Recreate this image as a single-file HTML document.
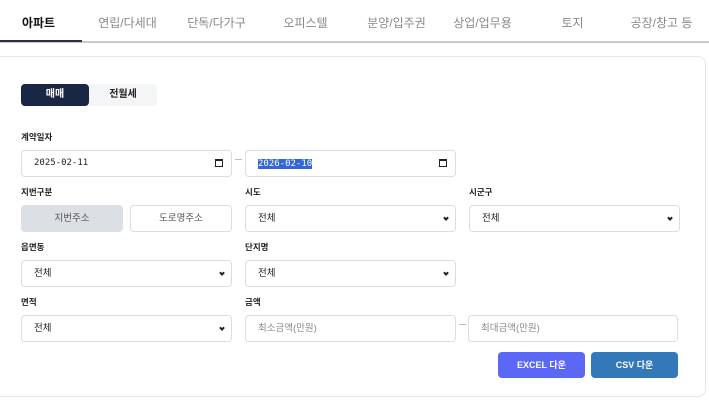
<!DOCTYPE html>
<html><head><meta charset="utf-8"><style>
*{box-sizing:border-box;margin:0;padding:0}
html,body{width:709px;height:401px;overflow:hidden}
body{background:#fff;font-family:"Liberation Sans","Noto Sans CJK KR",sans-serif;position:relative;color:#222}
.a{position:absolute}
.tab{position:absolute;top:14px;font-size:12px;color:#888;text-align:center;width:89px}
.lbl{position:absolute;font-size:8.5px;font-weight:bold;color:#222}
.box{position:absolute;height:27px;border:1px solid #ddd;border-radius:4px;background:#fff;font-size:9.5px;line-height:25px;padding-left:12px}
.chev{position:absolute;right:7px;top:10px;width:4px;height:4px;border-right:2px solid #222;border-bottom:2px solid #222;transform:rotate(45deg)}
.cal{position:absolute;right:8px;top:8px;width:8px;height:8px;border:1.3px solid #222;border-top-width:2.5px}
.dash{position:absolute;width:7px;height:1px;background:#bbb}
.btn{position:absolute;height:26px;border-radius:4px;color:#fff;font-size:9px;font-weight:bold;text-align:center;line-height:26px}
</style></head><body>
<div class="a" style="left:0;top:41px;width:709px;height:2px;background:#c8c8c8"></div>
<div class="a" style="left:0;top:40px;width:82px;height:2px;background:#2a2d4a"></div>
<div class="tab" style="left:-6px;color:#111;font-weight:bold">아파트</div>
<div class="tab" style="left:83px">연립/다세대</div>
<div class="tab" style="left:172px">단독/다가구</div>
<div class="tab" style="left:261px">오피스텔</div>
<div class="tab" style="left:352px">분양/입주권</div>
<div class="tab" style="left:438px">상업/업무용</div>
<div class="tab" style="left:528px">토지</div>
<div class="tab" style="left:617px">공장/창고 등</div>
<div class="a" style="left:-10px;top:56px;width:716px;height:341px;border:1px solid #e6e6e6;border-radius:8px"></div>
<div class="btn" style="left:21px;top:84px;width:68px;height:22px;line-height:22px;background:#1a2744;font-size:10px">매매</div>
<div class="a" style="left:89px;top:84px;width:68px;height:22px;line-height:22px;background:#f4f5f7;border-radius:0 4px 4px 0;text-align:center;font-size:10px;font-weight:bold">전월세</div>
<div class="lbl" style="left:21px;top:131px">계약일자</div>
<div class="box" style="left:21px;top:150px;width:211px;font-family:'DejaVu Sans Mono',monospace;font-size:9px">2025-02-11<div class="cal"></div></div>
<div class="dash" style="left:235px;top:159px"></div>
<div class="box" style="left:245px;top:150px;width:211px;font-size:9px"><span style="background:#3367d6;color:#fff;font-family:'DejaVu Sans Mono',monospace">2026-02-10</span><div class="cal"></div></div>
<div class="lbl" style="left:21px;top:186px">지번구분</div>
<div class="box" style="left:21px;top:205px;width:102px;background:#dcdfe3;border-color:#dcdfe3;padding:0;text-align:center;color:#555">지번주소</div>
<div class="box" style="left:130px;top:205px;width:102px;padding:0;text-align:center;color:#555">도로명주소</div>
<div class="lbl" style="left:245px;top:186px">시도</div>
<div class="box" style="left:245px;top:205px;width:211px">전체<div class="chev"></div></div>
<div class="lbl" style="left:469px;top:186px">시군구</div>
<div class="box" style="left:469px;top:205px;width:211px">전체<div class="chev"></div></div>
<div class="lbl" style="left:21px;top:241px">읍면동</div>
<div class="box" style="left:21px;top:260px;width:211px">전체<div class="chev"></div></div>
<div class="lbl" style="left:245px;top:241px">단지명</div>
<div class="box" style="left:245px;top:260px;width:211px">전체<div class="chev"></div></div>
<div class="lbl" style="left:21px;top:296px">면적</div>
<div class="box" style="left:21px;top:315px;width:211px">전체<div class="chev"></div></div>
<div class="lbl" style="left:245px;top:296px">금액</div>
<div class="box" style="left:245px;top:315px;width:211px;color:#888">최소금액(만원)</div>
<div class="dash" style="left:459px;top:324px"></div>
<div class="box" style="left:468px;top:315px;width:210px;color:#888">최대금액(만원)</div>
<div class="btn" style="left:498px;top:352px;width:87px;background:#5b67f5">EXCEL 다운</div>
<div class="btn" style="left:591px;top:352px;width:87px;background:#3378b8">CSV 다운</div>
</body></html>
